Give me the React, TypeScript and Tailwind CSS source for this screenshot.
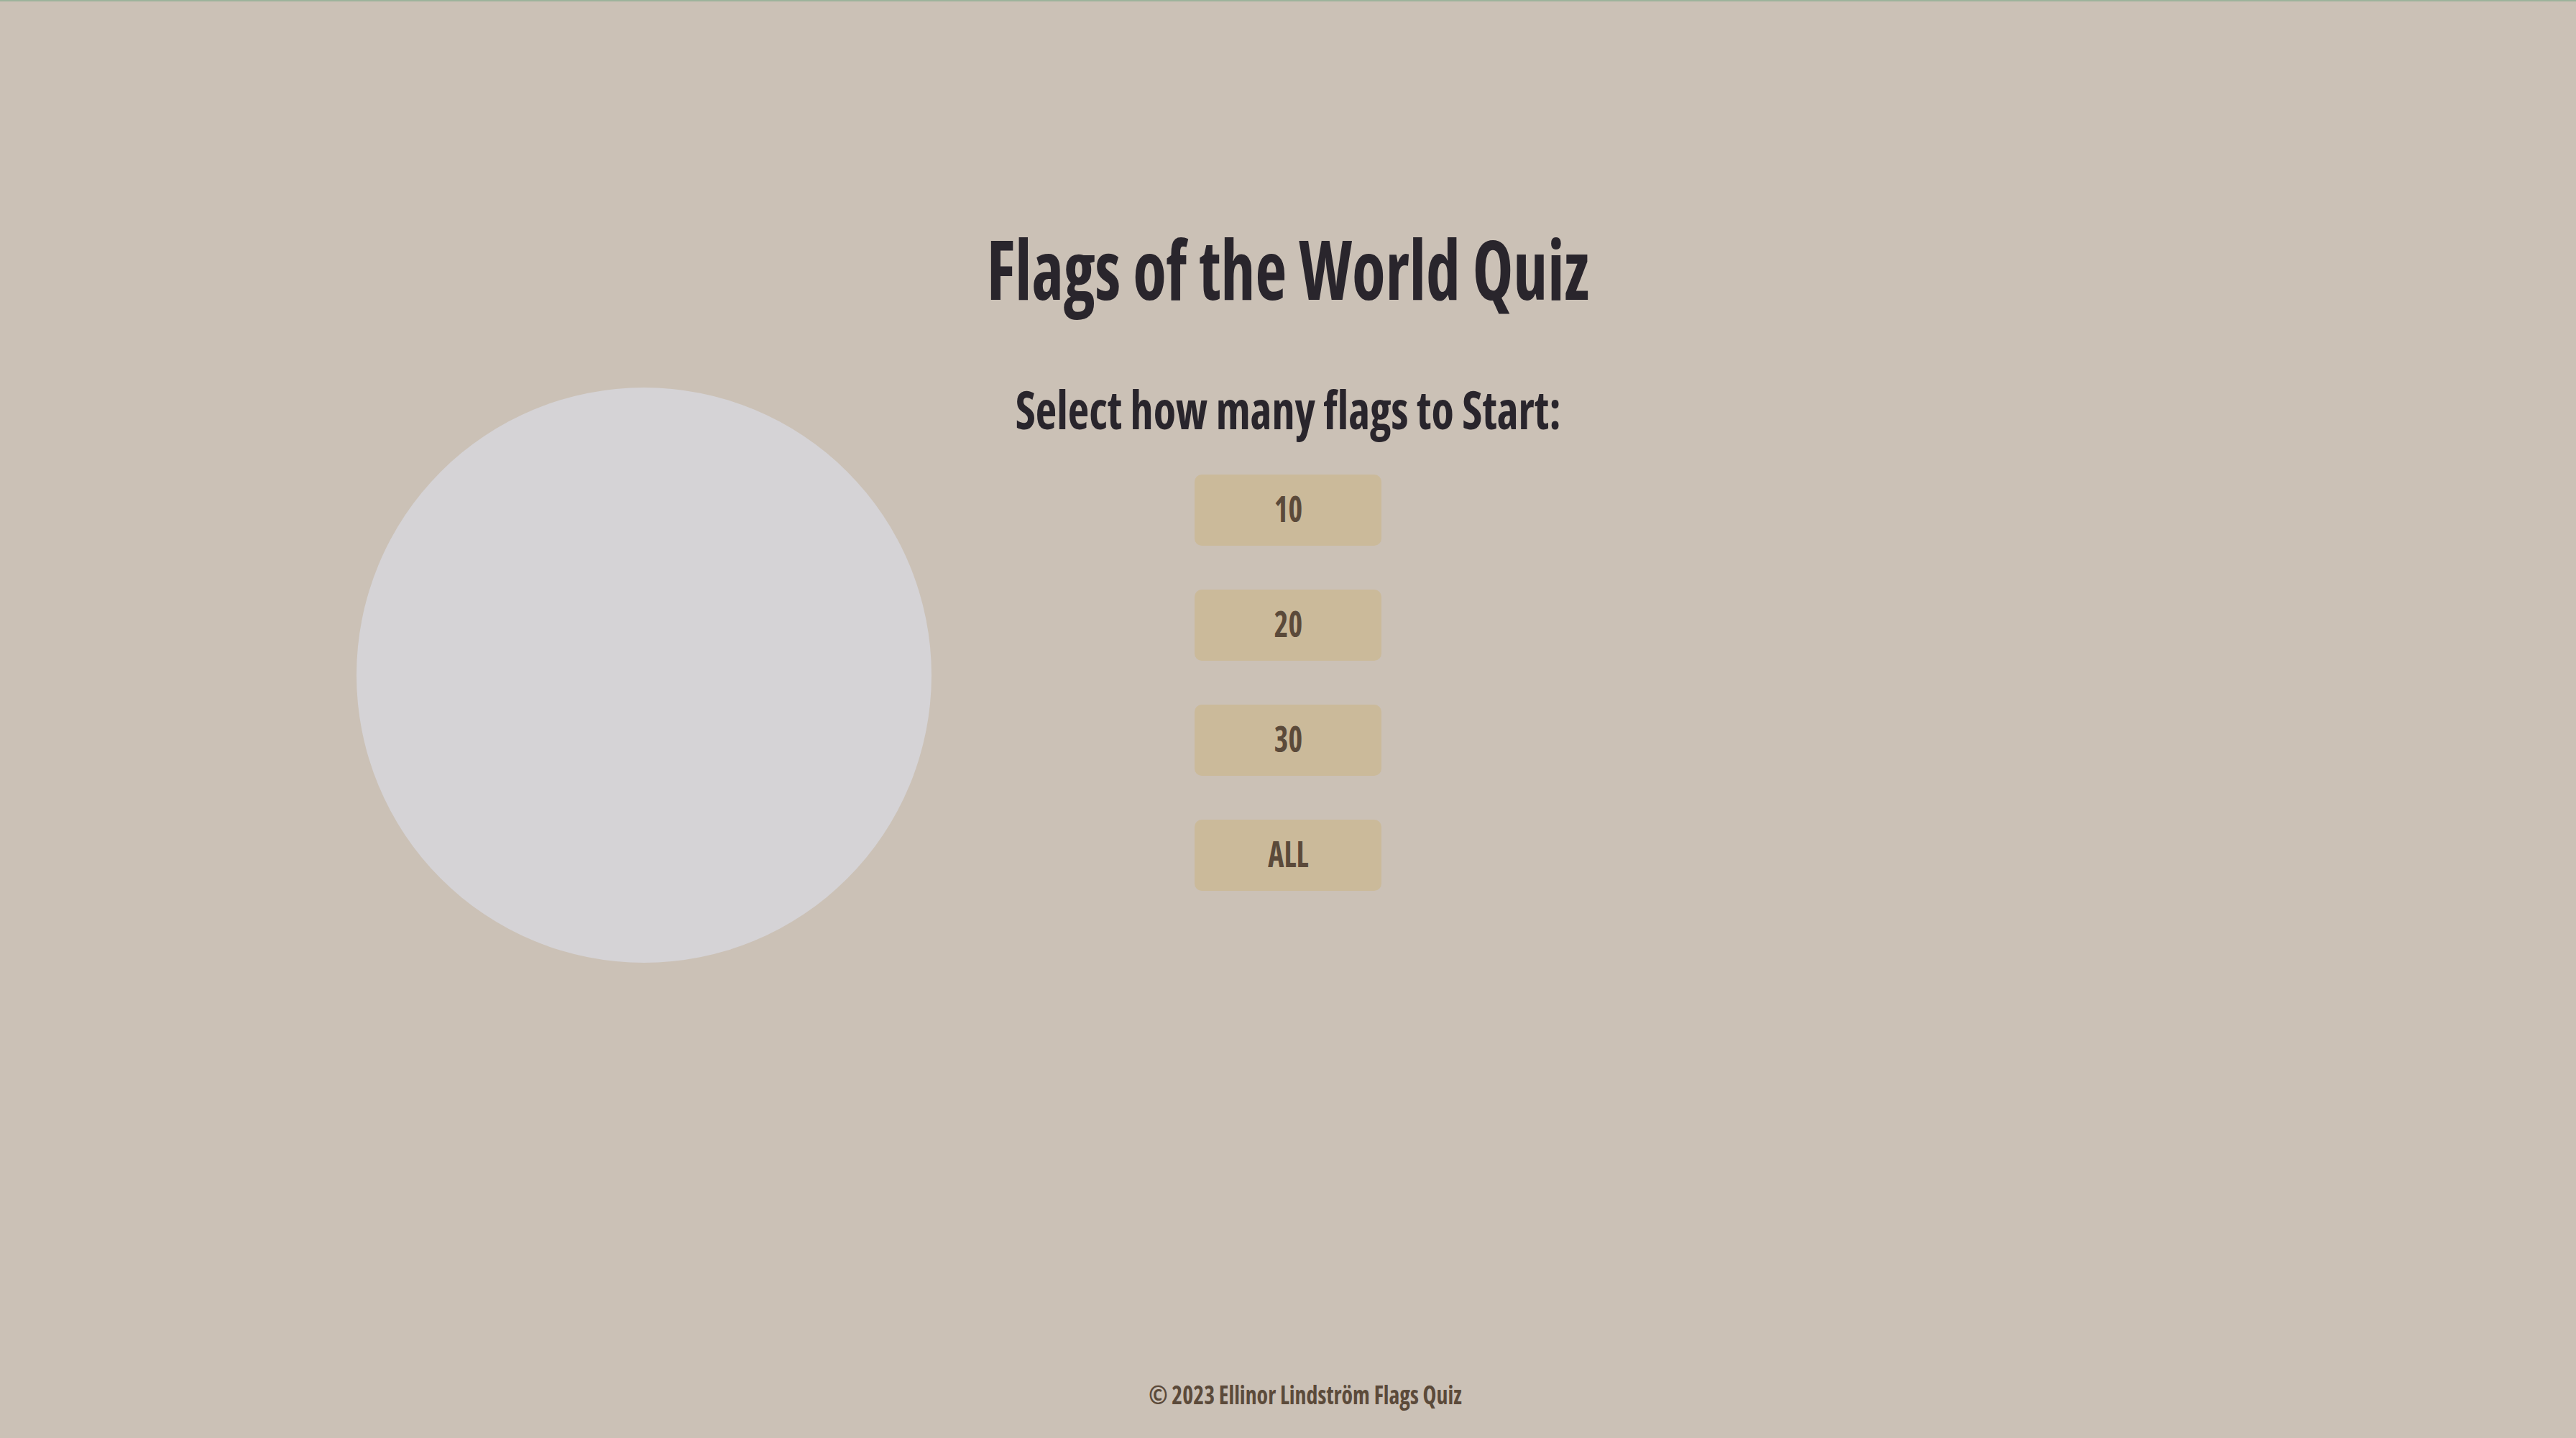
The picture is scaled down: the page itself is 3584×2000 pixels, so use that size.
const FONT = "font-['Open_Sans',sans-serif] font-bold font-stretch-[75%]";

function CountButton({ label }: { label: string }) {
  return (
    <button
      type="button"
      className="flex h-[99px] w-[260px] items-center justify-center rounded-[10px] bg-[#cbba9a] pb-[6px] text-[#5b4a3a]"
    >
      <span className={`${FONT} scale-x-[0.84] text-[50px] leading-none`}>{label}</span>
    </button>
  );
}

export default function App() {
  return (
    <div className="relative flex min-h-screen flex-col items-center border-t-2 border-[#9db39b] bg-[#cbc1b6]">
      <div className="absolute left-[496px] top-[537px] h-[800px] w-[800px] rounded-full bg-[#d5d3d6]" />
      <main className="relative flex flex-col items-center">
        <h1 className={`${FONT} mt-[313px] scale-x-[0.83] text-[115px] leading-none text-[#29252c]`}>
          Flags of the World Quiz
        </h1>
        <h2 className={`${FONT} mt-[102px] scale-x-[0.868] text-[74px] leading-none text-[#29252c]`}>
          Select how many flags to Start:
        </h2>
        <div className="mt-[54px] flex flex-col items-center gap-[61px]">
          {["10", "20", "30", "ALL"].map((n) => (
            <CountButton key={n} label={n} />
          ))}
        </div>
      </main>
      <footer className="relative mt-auto pb-[42px] pl-[48px]">
        <p className={`${FONT} scale-x-[0.885] text-[36px] leading-none text-[#5b4a3a]`}>
          © 2023 Ellinor Lindström Flags Quiz
        </p>
      </footer>
    </div>
  );
}
